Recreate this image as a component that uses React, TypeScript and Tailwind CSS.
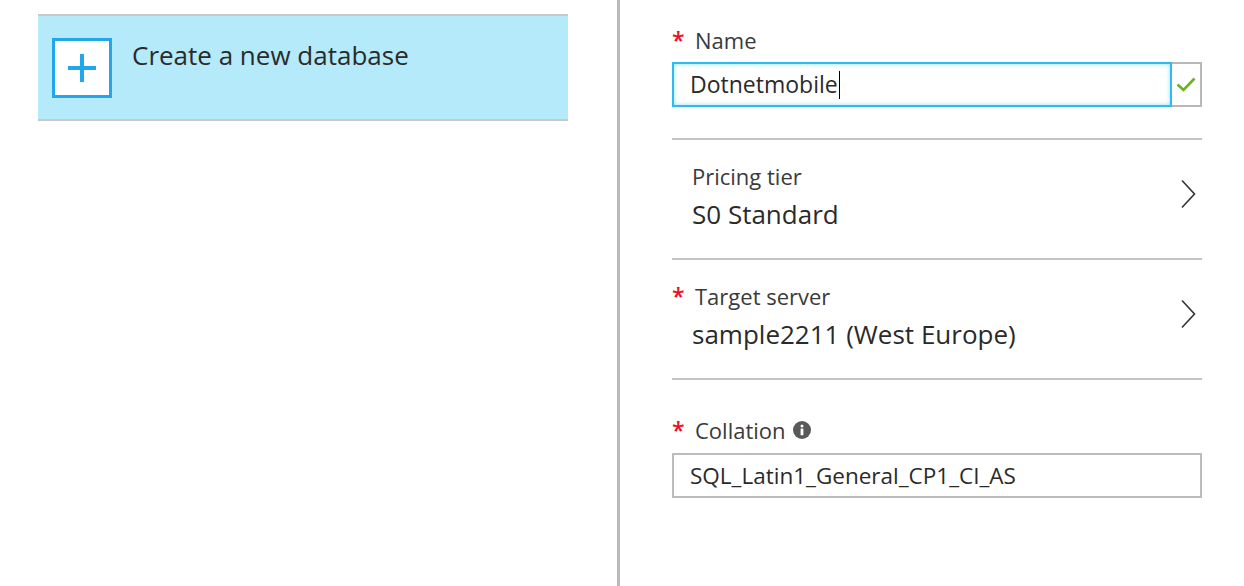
const font = { fontFamily: '"Open Sans", "Noto Sans", sans-serif' };

const Asterisk = () => (
  <span className="w-[20px] shrink-0 text-[23px] font-semibold leading-none text-[#e81123]">*</span>
);

const Chevron = () => (
  <svg width="16" height="30" viewBox="0 0 16 30" fill="none">
    <polyline points="2,1.5 14.5,15 2,28.5" stroke="#333" strokeWidth="1.6" />
  </svg>
);

const InfoIcon = () => (
  <svg width="18" height="18" viewBox="0 0 18 18">
    <circle cx="9" cy="9" r="9" fill="#595959" />
    <circle cx="9" cy="5" r="1.5" fill="#fff" />
    <rect x="7.6" y="7.6" width="2.8" height="6.6" fill="#fff" />
  </svg>
);

const PickerRow = ({
  label,
  value,
  required,
}: {
  label: string;
  value: string;
  required?: boolean;
}) => (
  <div className="flex justify-between pt-[22px] pb-[26px]">
    <div>
      <div className="flex h-[28px] items-center">
        {required ? <Asterisk /> : <span className="w-[20px]" />}
        <span className={`${required ? "ml-[3px]" : ""} text-[22px] text-[#3a3a3a]`}>
          {label}
        </span>
      </div>
      <div className="mt-[6px] pl-[20px] text-[26px] leading-[36px] text-[#2a2a2a]">
        {value}
      </div>
    </div>
    <div className="mt-[17px] mr-[6px]">
      <Chevron />
    </div>
  </div>
);

export default function App() {
  return (
    <div className="flex h-[586px] w-[1244px] bg-white" style={font}>
      <div className="w-[617px] shrink-0 pt-[14px] pl-[38px]">
        <div className="flex h-[107px] w-[530px] border-y-2 border-[#c9c9c9] bg-[#b4eaf9]">
          <div className="ml-[14px] mt-[22px] flex h-[60px] w-[60px] items-center justify-center border-[3px] border-[#22a7ea] bg-white">
            <svg width="28" height="28" viewBox="0 0 28 28">
              <rect x="0" y="12" width="28" height="4" fill="#22a7ea" />
              <rect x="12" y="0" width="4" height="28" fill="#22a7ea" />
            </svg>
          </div>
          <div className="ml-[20px] mt-[22px] text-[26px] leading-[34px] text-[#2b2b2b]">
            Create a new database
          </div>
        </div>
      </div>

      <div className="w-[3px] shrink-0 bg-[#bababa]" />

      <div className="w-[582px] pt-[26px] pl-[52px]">
        <div className="flex h-[28px] items-center">
          <Asterisk />
          <span className="ml-[3px] text-[22px] text-[#3a3a3a]">Name</span>
        </div>
        <div className="mt-[8px] flex h-[45px] w-[530px]">
          <div className="flex flex-1 items-center border-2 border-[#2ebbee] pl-[16px] text-[23px] text-[#2a2a2a] shadow-[inset_0_0_4px_#8fdcf6]">
            Dotnetmobile
            <span className="ml-[1px] inline-block h-[28px] w-[1px] bg-black" />
          </div>
          <div className="flex w-[30px] items-center justify-center border-2 border-l-0 border-[#b8b8b8]">
            <svg width="20" height="15" viewBox="0 0 20 15" fill="none">
              <path d="M1.5 7.5 L7.5 13 L18.5 1.5" stroke="#6ab221" strokeWidth="2.6" />
            </svg>
          </div>
        </div>

        <div className="mt-[31px] h-[2px] w-[530px] bg-[#c4c4c4]" />
        <div className="w-[530px]">
          <PickerRow label="Pricing tier" value="S0 Standard" />
        </div>
        <div className="h-[2px] w-[530px] bg-[#c4c4c4]" />
        <div className="w-[530px]">
          <PickerRow label="Target server" value="sample2211 (West Europe)" required />
        </div>
        <div className="h-[2px] w-[530px] bg-[#c4c4c4]" />

        <div className="mt-[36px] flex h-[28px] items-center">
          <Asterisk />
          <span className="ml-[3px] text-[22px] text-[#3a3a3a]">Collation</span>
          <span className="ml-[7px]">
            <InfoIcon />
          </span>
        </div>
        <div className="mt-[9px] flex h-[45px] w-[530px] items-center border-2 border-[#bcbcbc] pl-[16px] text-[22.5px] text-[#2a2a2a]">
          SQL_Latin1_General_CP1_CI_AS
        </div>
      </div>
    </div>
  );
}
